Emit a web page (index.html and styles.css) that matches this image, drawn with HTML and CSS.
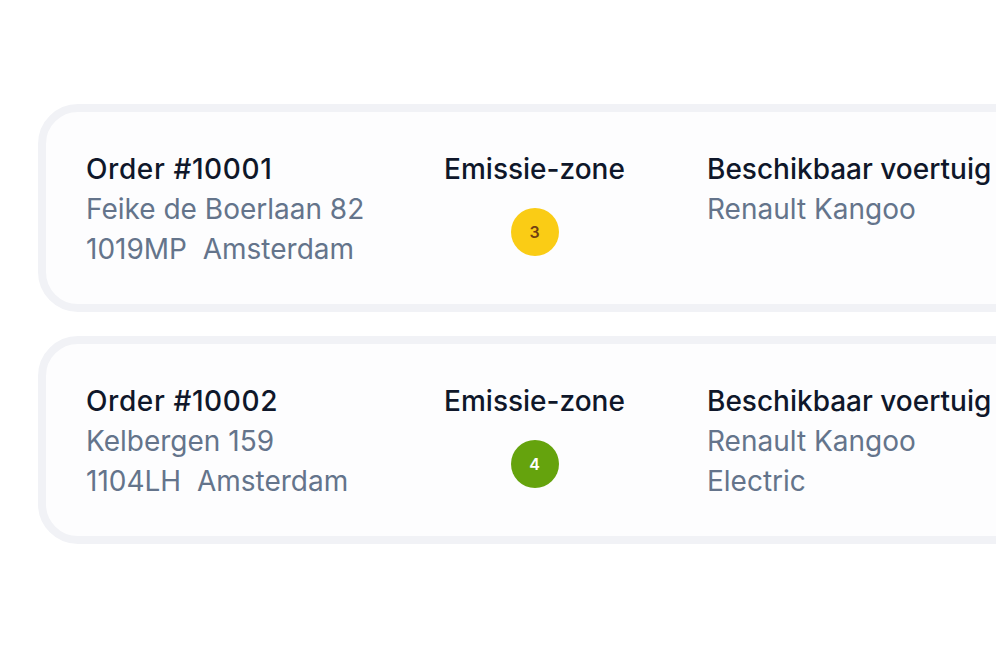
FILE: index.html
```html
<!DOCTYPE html>
<html lang="nl">
<head>
    <meta charset="UTF-8">
    <meta name="viewport" content="width=device-width, initial-scale=1.0">
    <title>Orders</title>
    <link rel="stylesheet" href="styles.css">
</head>
<body>
    <div class="order-list">
        <div class="order-card">
            <div class="order-col">
                <div class="col-title">Order #10001</div>
                <div class="col-text">Feike de Boerlaan 82</div>
                <div class="col-text">1019MP&nbsp; Amsterdam</div>
            </div>
            <div class="order-col zone-col">
                <div class="col-title">Emissie-zone</div>
                <span class="zone-badge zone-3">3</span>
            </div>
            <div class="order-col">
                <div class="col-title">Beschikbaar voertuig</div>
                <div class="col-text">Renault Kangoo</div>
            </div>
        </div>

        <div class="order-card">
            <div class="order-col">
                <div class="col-title">Order #10002</div>
                <div class="col-text">Kelbergen 159</div>
                <div class="col-text">1104LH&nbsp; Amsterdam</div>
            </div>
            <div class="order-col zone-col">
                <div class="col-title">Emissie-zone</div>
                <span class="zone-badge zone-4">4</span>
            </div>
            <div class="order-col">
                <div class="col-title">Beschikbaar voertuig</div>
                <div class="col-text">Renault Kangoo</div>
                <div class="col-text">Electric</div>
            </div>
        </div>
    </div>
</body>
</html>
```

FILE: styles.css
```css
/* Page */
body {
    margin: 0;
    font-family: Inter, "Noto Sans", sans-serif;
    background-color: #ffffff;
    overflow: hidden;
}

/* List of order cards */
.order-list {
    display: flex;
    flex-direction: column;
    gap: 24px;
    padding: 104px 0 0 38px;
    width: 1200px;
}

.order-card {
    display: grid;
    grid-template-columns: 276px 181px auto;
    column-gap: 82px;
    align-items: start;
    padding: 37px 40px 35px;
    background: #fdfdfe;
    border: 8px solid #f1f2f6;
    border-radius: 40px;
    width: 1100px;
    box-sizing: border-box;
    height: 208px;
}

.order-col {
    display: flex;
    flex-direction: column;
}

.col-title {
    font-size: 28px;
    line-height: 40px;
    font-weight: 500;
    color: #0f172a;
    white-space: nowrap;
}

.order-col:first-child .col-title {
    letter-spacing: 0.6px;
}

.col-text {
    font-size: 28px;
    line-height: 40px;
    color: #64748b;
    white-space: nowrap;
}

/* Emission zone badge */
.zone-col {
    align-items: center;
}

.zone-badge {
    display: flex;
    align-items: center;
    justify-content: center;
    width: 48px;
    height: 48px;
    margin-top: 19px;
    border-radius: 50%;
    font-size: 16px;
    font-weight: 600;
}

.zone-3 {
    background-color: #facc15;
    color: #713f12;
}

.zone-4 {
    background-color: #65a30d;
    color: #ffffff;
}
```
